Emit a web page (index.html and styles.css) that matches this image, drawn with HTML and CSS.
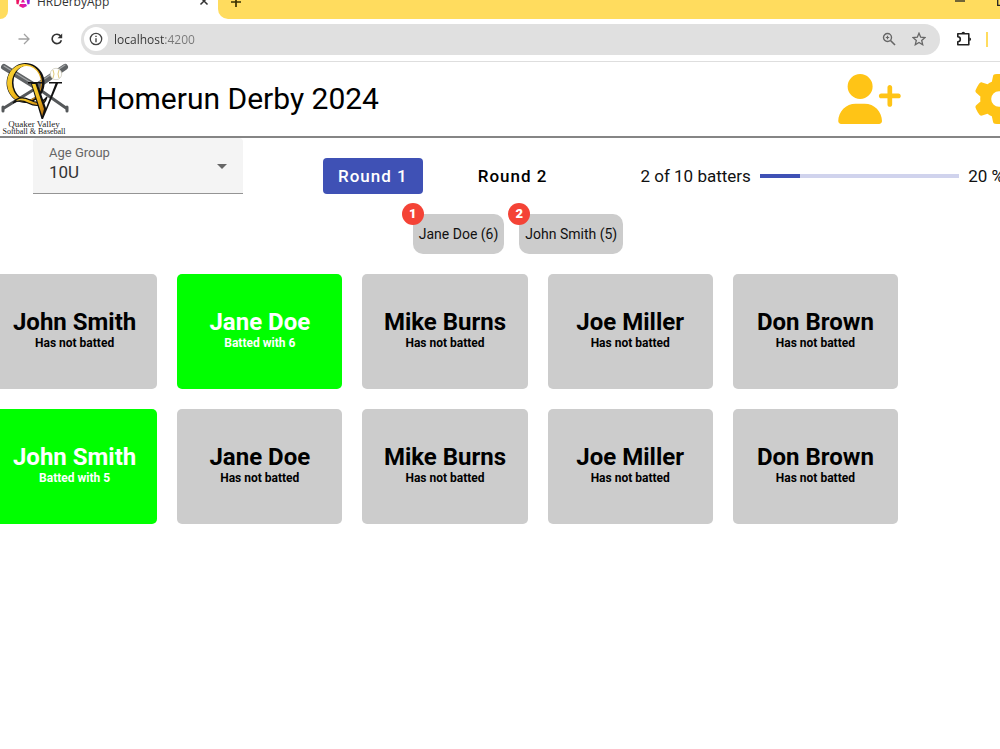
FILE: index.html
```html
<!DOCTYPE html>
<html lang="en">
<head>
<meta charset="utf-8">
<meta name="viewport" content="width=device-width, initial-scale=1">
<title>HRDerbyApp</title>
<link rel="stylesheet" href="styles.css">
</head>
<body>
<div class="browser">
  <div class="tab-strip">
    <span class="tab-edge"></span>
    <div class="tab">
      <svg class="favicon" viewBox="0 0 16 16" aria-hidden="true">
        <defs><linearGradient id="fav" x1="0" y1="0" x2="1" y2="0"><stop offset="0" stop-color="#f0104c"/><stop offset=".55" stop-color="#e61aa8"/><stop offset="1" stop-color="#7b24f5"/></linearGradient></defs>
        <path fill="url(#fav)" d="M6 0 .8 2.600 1.500 12 3.500 12.500zM10 0 15.200 2.600 14.500 12 12.500 12.500zM8 6 6 10.500h4zM5 12h6l1 2L8 16l-4-2z"/>
      </svg>
      <span class="tab-title">HRDerbyApp</span>
      <button class="tab-close" aria-label="Close tab"><svg viewBox="0 0 10 10" width="10" height="10"><path d="M1.500 1.500l7 7m0-7l-7 7" stroke="#333" stroke-width="1.500"/></svg></button>
    </div>
    <div class="tab-rest">
      <button class="plain" aria-label="New tab"><svg viewBox="0 0 12 12" width="12" height="12"><path d="M6 1v10M1 6h10" stroke="#3a3000" stroke-width="1.700"/></svg></button>
      <div class="window-controls">
        <button class="plain" aria-label="Minimize"><svg viewBox="0 0 10 10" width="10" height="10"><path d="M0 5h10" stroke="#222" stroke-width="1.300"/></svg></button>
        <button class="plain" aria-label="Maximize"><svg viewBox="0 0 10 10" width="10" height="10"><path d="M.7.700h8.600v8.600H.7z" fill="none" stroke="#222" stroke-width="1.300"/></svg></button>
      </div>
    </div>
  </div>
  <div class="address-row">
    <button class="plain" aria-label="Forward"><svg viewBox="0 0 12 12" width="12" height="12"><path d="M.5 6h10M6 1l5 5-5 5" fill="none" stroke="#a2a2a2" stroke-width="1.300"/></svg></button>
    <button class="plain reload" aria-label="Reload"><svg viewBox="0 0 12 12" width="12" height="12"><path d="M10.400 7.200A4.700 4.700 0 1 1 9.600 3" fill="none" stroke="#333" stroke-width="1.600"/><path d="M11.200.5v4.700H6.500z" fill="#333"/></svg></button>
    <div class="omnibox">
      <button class="site-info" aria-label="View site information"><svg viewBox="0 0 14 14" width="14" height="14"><circle cx="7" cy="7" r="5.700" fill="none" stroke="#444" stroke-width="1.300"/><path d="M7 6.200v4M7 3.700v1.400" stroke="#444" stroke-width="1.400"/></svg></button>
      <input class="url" type="text" value="localhost:4200" aria-label="Address">
      <button class="plain" aria-label="Zoom"><svg viewBox="0 0 14 14" width="14" height="14" fill="none" stroke="#666"><circle cx="5.500" cy="5.500" r="4" stroke-width="1.400"/><path d="M8.500 8.500l4.500 4.500" stroke-width="1.600"/><path d="M5.500 3.800v3.400M3.800 5.500h3.400" stroke-width="1.200"/></svg></button>
      <button class="plain" aria-label="Bookmark"><svg viewBox="0 0 14 14" width="14" height="14"><path d="M7 1.200l1.700 4 4.300.4-3.300 2.800 1 4.300L7 10.400l-3.700 2.300 1-4.300L1 5.600l4.300-.4z" fill="none" stroke="#666" stroke-width="1.300"/></svg></button>
    </div>
    <button class="plain" aria-label="Extensions"><svg viewBox="0 0 16 16" width="16" height="16"><path d="M1.800 2.800h11v11h-11V10.800a2.500 2.500 0 0 0 0-5z" fill="none" stroke="#222" stroke-width="1.600" stroke-linejoin="round"/><path d="M5.500 2.500a1.800 1.800 0 0 1 3.600 0zM13.300 6.500a1.800 1.800 0 0 1 0 3.600z" fill="#222"/></svg></button>
    <span class="divider"></span>
  </div>
</div>

<header class="app-header">
  <svg class="logo" viewBox="0 0 70 74" role="img" aria-label="Quaker Valley Softball &amp; Baseball">
    <defs><linearGradient id="gold" x1="0" y1="0" x2="1" y2="1"><stop offset="0" stop-color="#fbd83c"/><stop offset=".5" stop-color="#f0b91c"/><stop offset="1" stop-color="#b36b10"/></linearGradient></defs>
    <g stroke-linecap="round" fill="none">
      <path d="M4 5L38 26" stroke="#606365" stroke-width="6"/>
      <path d="M36 25L66 46" stroke="#55585a" stroke-width="3"/>
      <path d="M4 46L38 25" stroke="#55585a" stroke-width="3"/>
      <path d="M37 24L65 5" stroke="#606365" stroke-width="6"/>
      <path d="M4 4L38 25M37 22L65 3" stroke="#a2a5a7" stroke-width="1.200"/>
      <path d="M3 45v4M67 45v4" stroke="#55585a" stroke-width="3"/>
    </g>
    <path fill="#111" fill-rule="evenodd" d="M25.500 1a19 20 0 1 0 .1 0zM27.500 3.500a14 17 0 1 1-.1 0z"/>
    <path fill="url(#gold)" fill-rule="evenodd" d="M24.500 2a17.500 19 0 1 0 .1 0zM26.500 4a14.500 17 0 1 1-.1 0z"/>
    <path d="M13 41c5-7 11-6 17-3s11 4 17-3c-3 10-11 10-19 6-6-3-10-3-15 0z" fill="url(#gold)" stroke="#111" stroke-width="1.200"/>
    <path d="M28 20h14v1.500h-4.500L46 46l9.500-24.500H49V20h13v1.500h-4L43 57h-1.500L31 21.500h-3z" fill="#111"/>
    <path d="M32 22h3.500L44 47l-1.800 7z" fill="url(#gold)"/>
    <circle cx="56" cy="12" r="5.700" fill="#fff" stroke="#c9c5b4" stroke-width=".7"/>
    <path d="M53 8q2 4 0 8M59 8q-2 4 0 8" fill="none" stroke="#d8bd59" stroke-width=".8"/>
    <text class="logo-text logo-town" x="34" y="65" text-anchor="middle">Quaker Valley</text>
    <text class="logo-text" x="34" y="72" text-anchor="middle">Softball &amp; Baseball</text>
  </svg>
  <h1 class="app-title">Homerun Derby 2024</h1>
  <div class="header-actions">
    <button class="plain" aria-label="Add player"><svg viewBox="0 0 640 512" width="63" height="50" fill="#ffc416"><path d="M96 128a128 128 0 1 1 256 0A128 128 0 1 1 96 128zM0 482.300C0 383.800 79.800 304 178.300 304h91.400C368.200 304 448 383.800 448 482.300c0 16.400-13.300 29.700-29.700 29.700H29.700C13.300 512 0 498.700 0 482.300zM504 312V248H440c-13.300 0-24-10.700-24-24s10.700-24 24-24h64V136c0-13.300 10.700-24 24-24s24 10.700 24 24v64h64c13.300 0 24 10.700 24 24s-10.700 24-24 24H552v64c0 13.300-10.700 24-24 24s-24-10.700-24-24z"/></svg></button>
    <button class="plain" aria-label="Settings"><svg viewBox="0 0 512 512" width="50" height="50" fill="#ffc416"><path d="M495.900 166.600c3.200 8.700.5 18.400-6.400 24.600l-43.300 39.400c1.100 8.300 1.700 16.800 1.700 25.400s-.6 17.100-1.700 25.400l43.300 39.400c6.900 6.200 9.600 15.900 6.400 24.600-4.400 11.900-9.700 23.300-15.800 34.300l-4.700 8.100c-6.600 11-14 21.400-22.100 31.200-5.900 7.200-15.700 9.600-24.500 6.800l-55.700-17.700c-13.400 10.300-28.200 18.900-44 25.400l-12.500 57.100c-2 9.100-9 16.300-18.200 17.800-13.800 2.300-28 3.500-42.500 3.500s-28.700-1.200-42.500-3.500c-9.200-1.500-16.200-8.700-18.200-17.800l-12.500-57.100c-15.800-6.500-30.600-15.100-44-25.400l-55.600 17.800c-8.800 2.800-18.600.3-24.500-6.800-8.100-9.800-15.500-20.200-22.100-31.200l-4.700-8.100c-6.100-11-11.400-22.400-15.800-34.300-3.200-8.700-.5-18.400 6.400-24.600l43.300-39.400C64.600 273.100 64 264.600 64 256s.6-17.100 1.700-25.400L22.400 191.200c-6.900-6.200-9.600-15.900-6.400-24.600 4.400-11.900 9.700-23.300 15.800-34.300l4.700-8.100c6.600-11 14-21.400 22.100-31.200 5.900-7.200 15.700-9.600 24.500-6.800l55.700 17.700c13.400-10.300 28.200-18.900 44-25.400l12.500-57.100c2-9.100 9-16.300 18.200-17.800C227.300 1.200 241.500 0 256 0s28.700 1.200 42.500 3.500c9.200 1.500 16.200 8.700 18.200 17.800l12.500 57.100c15.800 6.500 30.600 15.100 44 25.400l55.700-17.700c8.800-2.800 18.600-.3 24.500 6.800 8.100 9.800 15.500 20.200 22.100 31.200l4.700 8.100c6.100 11 11.400 22.400 15.800 34.300zM256 336a80 80 0 1 0 0-160 80 80 0 1 0 0 160z"/></svg></button>
  </div>
</header>

<main>
  <section class="controls">
    <div class="field">
      <label for="age">Age Group</label>
      <select id="age"><option>10U</option></select>
      <svg class="caret" viewBox="0 0 10 5" width="10" height="5" aria-hidden="true"><path d="M0 0h10L5 5z" fill="#666"/></svg>
    </div>
    <div class="rounds">
      <button class="round round-active">Round 1</button>
      <button class="round">Round 2</button>
    </div>
    <div class="status">
      <label for="batted">2 of 10 batters</label>
      <progress id="batted" value="20" max="100"></progress>
      <span>20 %</span>
    </div>
  </section>

  <ol class="leaders">
    <li class="chip"><span class="badge">1</span>Jane Doe (6)</li>
    <li class="chip"><span class="badge">2</span>John Smith (5)</li>
  </ol>

  <section class="players">
    <button class="player"><span class="name">John Smith</span><span class="note">Has not batted</span></button>
    <button class="player batted"><span class="name">Jane Doe</span><span class="note">Batted with 6</span></button>
    <button class="player"><span class="name">Mike Burns</span><span class="note">Has not batted</span></button>
    <button class="player"><span class="name">Joe Miller</span><span class="note">Has not batted</span></button>
    <button class="player"><span class="name">Don Brown</span><span class="note">Has not batted</span></button>
    <button class="player batted"><span class="name">John Smith</span><span class="note">Batted with 5</span></button>
    <button class="player"><span class="name">Jane Doe</span><span class="note">Has not batted</span></button>
    <button class="player"><span class="name">Mike Burns</span><span class="note">Has not batted</span></button>
    <button class="player"><span class="name">Joe Miller</span><span class="note">Has not batted</span></button>
    <button class="player"><span class="name">Don Brown</span><span class="note">Has not batted</span></button>
  </section>
</main>
</body>
</html>
```

FILE: styles.css
```css
* { box-sizing: border-box; }

body {
  margin: 0;
  overflow: hidden;
  background: #fff;
  color: #111;
  font-family: Roboto, "Liberation Sans", sans-serif;
}

button { font: inherit; cursor: pointer; }
svg { display: block; flex: none; }

.plain {
  display: block;
  flex: none;
  padding: 0;
  border: 0;
  background: none;
}

/* Browser window */
.browser {
  border-bottom: 1px solid #dedede;
  font-family: "Open Sans", "Noto Sans", sans-serif;
  font-size: 12px;
}
.tab-strip {
  display: flex;
  height: 19px;
  background: #fff;
}
.tab-edge {
  width: 8px;
  background: #ffdc5e;
  border-bottom-right-radius: 8px;
}
.tab {
  display: flex;
  align-items: flex-start;
  width: 210px;
  padding: 0 9px 0 7px;
}
.favicon { width: 16px; height: 16px; margin-top: -8px; }
.tab-title { flex: 1; margin: -6px 0 0 6px; line-height: 16px; color: #333; }
.tab-close { margin-top: -4px; padding: 0; border: 0; background: none; }
.tab-rest {
  display: flex;
  flex: 1;
  justify-content: space-between;
  align-items: flex-start;
  padding-left: 12px;
  background: #ffdc5e;
  border-bottom-left-radius: 10px;
}
.tab-rest > .plain { margin-top: -4px; }
.window-controls { display: flex; gap: 32px; margin: -4px -7px 0 0; }

.address-row {
  display: flex;
  align-items: center;
  gap: 16px;
  height: 42px;
  padding: 0 12px 2px 18px;
}
.reload { margin: 0 2px 0 5px; }
.omnibox {
  display: flex;
  flex: 1;
  align-items: center;
  gap: 16px;
  height: 31px;
  padding: 0 14px 0 3px;
  border-radius: 16px;
  background: #e0e0e0;
}
.site-info {
  display: grid;
  place-items: center;
  width: 24px;
  height: 24px;
  padding: 0;
  border: 0;
  border-radius: 50%;
  background: #fff;
}
.url {
  flex: 1;
  min-width: 0;
  margin-left: -10px;
  padding: 0;
  border: 0;
  background: linear-gradient(90deg, #333 51px, #777 51px);
  background-clip: text;
  -webkit-background-clip: text;
  color: transparent;
  font: inherit;
}
.divider { width: 2px; height: 15px; margin-left: -2px; background: #ffdc5e; }

/* App header */
.app-header {
  display: flex;
  align-items: center;
  height: 76px;
  border-bottom: 2px solid #858585;
}
.logo { width: 70px; height: 74px; }
.logo-text { font: 8px "Liberation Serif", serif; fill: #222; }
.logo-town { font-size: 9px; }
.app-title {
  flex: 1;
  margin: 0 0 0 26px;
  font-size: 30px;
  font-weight: 400;
  line-height: 40px;
  color: #000;
}
.header-actions { display: flex; gap: 73px; margin-right: -24px; }

/* Controls */
.controls {
  display: flex;
  align-items: flex-end;
  gap: 80px;
  padding-left: 33px;
}
.field {
  position: relative;
  width: 210px;
}
.field label {
  position: absolute;
  top: 7px;
  left: 16px;
  font-size: 13px;
  line-height: 16px;
  color: #666;
  pointer-events: none;
}
.field select {
  display: block;
  width: 100%;
  height: 56px;
  padding: 13px 16px 0;
  border: 0;
  border-bottom: 1px solid #949494;
  border-radius: 4px 4px 0 0;
  background: #f4f4f4;
  color: #333;
  font: 17px Roboto, sans-serif;
  appearance: none;
}
.caret { position: absolute; top: 26px; right: 16px; }
.rounds { display: flex; gap: 40px; }
.round {
  height: 36px;
  padding: 0 15px;
  border: 0;
  border-radius: 4px;
  background: none;
  color: #000;
  font-size: 17px;
  font-weight: 500;
  letter-spacing: 1px;
  white-space: nowrap;
}
.round-active { background: #3f51b5; color: #fff; }
.status {
  display: flex;
  flex: 1;
  align-items: center;
  gap: 9px;
  height: 36px;
  margin: 0 -4px 0 -2px;
  font-size: 17px;
  line-height: 24px;
  white-space: nowrap;
}
progress {
  flex: 1;
  min-width: 0;
  height: 4px;
  border: 0;
  background: #d0d3ed;
  appearance: none;
}
progress::-webkit-progress-bar { background: #d0d3ed; }
progress::-webkit-progress-value { background: #3f51b5; }
progress::-moz-progress-bar { background: #3f51b5; }

/* Leaders */
.leaders {
  display: flex;
  justify-content: center;
  gap: 15px;
  margin: 20px 0;
  padding: 0 0 0 36px;
  list-style: none;
}
.chip {
  position: relative;
  padding: 10px 6px;
  border-radius: 10px;
  background: #ccc;
  font-size: 14px;
  line-height: 20px;
}
.badge {
  position: absolute;
  top: -11px;
  left: -11px;
  width: 22px;
  height: 22px;
  border-radius: 50%;
  background: #f44336;
  color: #fff;
  font-size: 13px;
  font-weight: 900;
  line-height: 22px;
  text-align: center;
}

/* Players */
.players {
  display: grid;
  grid-template-columns: repeat(5, 1fr);
  gap: 20px;
  margin: 0 102px 0 -8px;
}
.player {
  display: flex;
  flex-direction: column;
  align-items: center;
  justify-content: center;
  height: 115px;
  padding: 0 0 6px;
  border: 0;
  border-radius: 5px;
  background: #ccc;
  color: #000;
  font-weight: 700;
}
.batted { background: #0f0; color: #fff; }
.name { font-size: 24px; line-height: 28px; }
.note { font-size: 12px; line-height: 14px; }
```
